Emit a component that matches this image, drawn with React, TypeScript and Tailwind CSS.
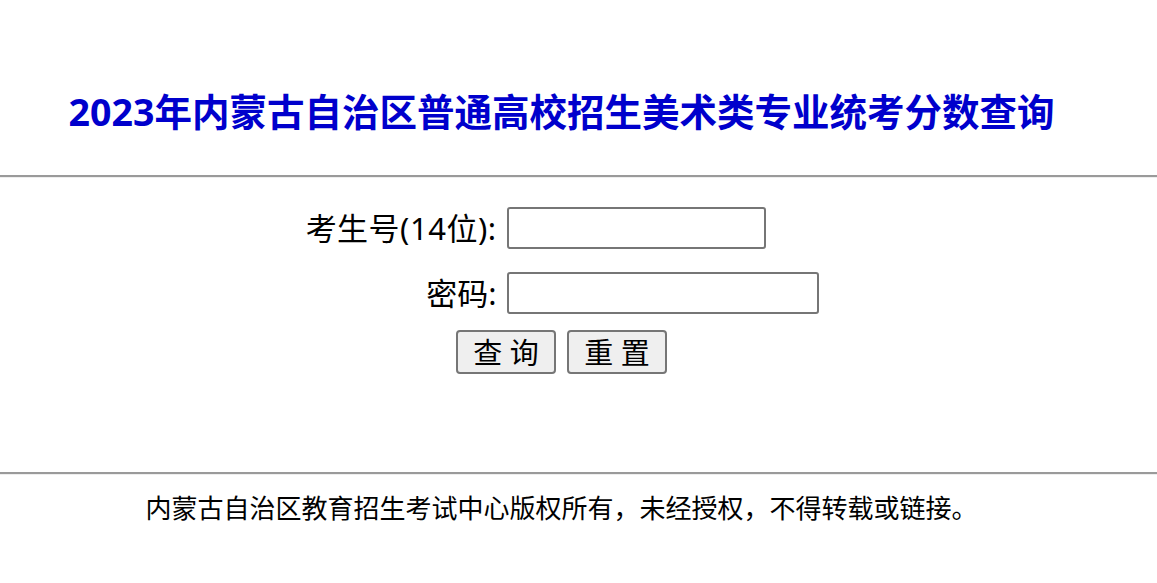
import React from "react";

const font = { fontFamily: '"Noto Sans", "Noto Sans CJK SC", sans-serif' };

function Rule() {
  return <div className="h-0 w-full border-t-2 border-t-[#9a9a9a] border-b border-b-[#eeeeee]" />;
}

export default function App() {
  return (
    <div className="w-[1157px] min-h-[583px] bg-white text-black" style={font}>
      <div className="pr-[34px] pt-[90px] pb-[41px] text-center">
        <h1 className="text-[37.5px] leading-[44px] font-bold text-[#0000cc] whitespace-nowrap">
          2023年内蒙古自治区普通高校招生美术类专业统考分数查询
        </h1>
      </div>
      <Rule />

      <div className="pr-[34px] pt-[29px] flex justify-center">
        <form
          className="grid grid-cols-[192px_312px] gap-x-[10px] items-center"
          onSubmit={(e) => e.preventDefault()}
        >
          <label className="text-right text-[31px] leading-[42px] tracking-[0.5px] whitespace-nowrap">考生号(14位):</label>
          <input
            type="text"
            maxLength={14}
            className="w-[259px] h-[42px] border-2 border-[#767676] rounded-[3px] bg-white px-1 text-[20px] outline-none"
          />

          <label className="mt-[23px] text-right text-[31px] leading-[42px] whitespace-nowrap">密码:</label>
          <input
            type="password"
            className="mt-[23px] w-[312px] h-[42px] border-2 border-[#767676] rounded-[3px] bg-white px-1 text-[20px] outline-none"
          />

          <div className="col-span-2 mt-[16px] flex justify-center gap-[11px]">
            <button
              type="submit"
              className="w-[100px] h-[44px] border-2 border-[#767676] rounded-[4px] bg-[#efefef] text-[29px] leading-none whitespace-pre"
            >
              查 询
            </button>
            <button
              type="reset"
              className="w-[100px] h-[44px] border-2 border-[#767676] rounded-[4px] bg-[#efefef] text-[29px] leading-none whitespace-pre"
            >
              重 置
            </button>
          </div>
        </form>
      </div>

      <div className="h-[98px]" />
      <Rule />
      <div className="pr-[34px] pt-[15px] text-center">
        <p className="text-[26px] leading-[36px] whitespace-nowrap">
          内蒙古自治区教育招生考试中心版权所有，未经授权，不得转载或链接。
        </p>
      </div>
    </div>
  );
}
